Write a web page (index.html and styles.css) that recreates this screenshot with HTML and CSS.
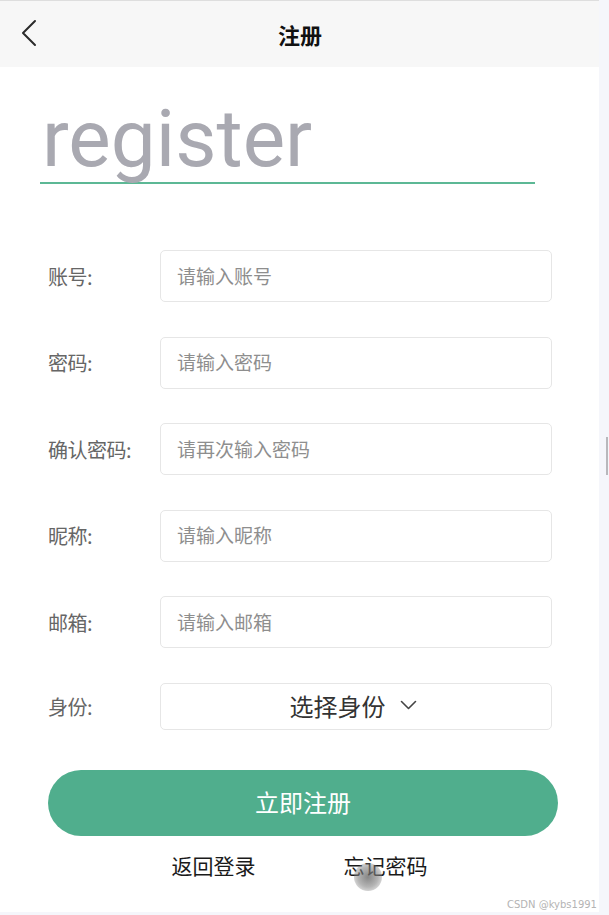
FILE: index.html
```html
<!DOCTYPE html>
<html lang="zh-CN">
<head>
<meta charset="utf-8">
<title>注册</title>
<link rel="stylesheet" href="styles.css">
</head>
<body>
<div class="app">
  <header class="topbar">
    <span class="back">
      <svg width="18" height="28" viewBox="0 0 18 28"><path d="M15 2 L3 14 L15 26" fill="none" stroke="#2b2b2b" stroke-width="2" stroke-linecap="round" stroke-linejoin="round"/></svg>
    </span>
    <h1 class="title">注册</h1>
    <span></span>
  </header>

  <div class="hero">register</div>

  <form class="form">
    <div class="row"><label class="label">账号:</label><input class="field" placeholder="请输入账号"></div>
    <div class="row"><label class="label">密码:</label><input class="field" type="password" placeholder="请输入密码"></div>
    <div class="row"><label class="label">确认密码:</label><input class="field" type="password" placeholder="请再次输入密码"></div>
    <div class="row"><label class="label">昵称:</label><input class="field" placeholder="请输入昵称"></div>
    <div class="row"><label class="label">邮箱:</label><input class="field" placeholder="请输入邮箱"></div>
    <div class="row"><label class="label">身份:</label>
      <div class="select"><span>选择身份</span>
        <svg width="17" height="10" viewBox="0 0 17 10"><path d="M1.5 1.5 L8.5 8.5 L15.5 1.5" fill="none" stroke="#444" stroke-width="1.6" stroke-linecap="round" stroke-linejoin="round"/></svg>
      </div>
    </div>
  </form>

  <button class="submit" type="button">立即注册</button>

  <div class="links">
    <a class="link">返回登录</a>
    <a class="link">忘记密码<span class="touch"></span></a>
  </div>

  <div class="watermark">CSDN @kybs1991</div>
</div>
<div class="scrollmark"></div>
</body>
</html>
```
FILE: styles.css
```css
html, body {
  margin: 0;
  padding: 0;
}
body {
  background: #f5f6fb;
  width: 609px;
  height: 915px;
  overflow: hidden;
  position: relative;
  font-family: "Noto Sans CJK SC", "Noto Sans", sans-serif;
}
.app {
  width: 599px;
  height: 912px;
  background: #fff;
  position: relative;
  display: flex;
  flex-direction: column;
}
.topbar {
  height: 66px;
  border-top: 1px solid #dedede;
  background: #f7f7f7;
  display: grid;
  grid-template-columns: 80px 1fr 80px;
  align-items: center;
}
.back {
  display: flex;
  padding-left: 20px;
  padding-bottom: 3px;
}
.title {
  margin: 0;
  text-align: center;
  font-size: 22px;
  font-weight: 700;
  color: #111;
  padding-left: 1px;
}
.hero {
  margin: 32px 64px 0 40px;
  padding-left: 2px;
  padding-bottom: 3px;
  border-bottom: 2px solid #5cb895;
  font-family: Roboto, sans-serif;
  font-size: 80px;
  line-height: 80px;
  color: #a9a9b1;
}
.form {
  margin: 66px 0 0 0;
  display: flex;
  flex-direction: column;
  gap: 34.5px;
}
.row {
  display: flex;
  align-items: center;
  padding-left: 48px;
}
.label {
  width: 112px;
  font-size: 20px;
  color: #666;
  letter-spacing: -0.5px;
}
.field {
  width: 392px;
  height: 52px;
  box-sizing: border-box;
  border: 1px solid #e6e6e6;
  border-radius: 5px;
  padding: 0 0 2px 16px;
  font-family: "Noto Sans CJK SC", sans-serif;
  font-size: 19px;
  color: #333;
  outline: none;
  background: #fff;
}
.field::placeholder {
  color: #8e8e8e;
}
.select {
  width: 392px;
  height: 47px;
  box-sizing: border-box;
  border: 1px solid #e6e6e6;
  border-radius: 5px;
  display: flex;
  align-items: center;
  justify-content: center;
  gap: 14px;
  font-size: 24px;
  color: #333;
  padding-right: 6px;
  padding-bottom: 2px;
}
.submit {
  margin: 40px 0 0 48px;
  width: 510px;
  height: 66px;
  border: none;
  border-radius: 33px;
  background: #50ae8d;
  color: #fff;
  font-family: "Noto Sans CJK SC", sans-serif;
  font-size: 24px;
  padding: 0 0 2px 0;
}
.links {
  margin-top: 14px;
  display: flex;
  justify-content: center;
  gap: 88px;
}
.link {
  font-size: 21px;
  line-height: 30px;
  color: #1a1a1a;
  position: relative;
}
.touch {
  position: absolute;
  left: 10px;
  top: 13px;
  width: 28px;
  height: 28px;
  border-radius: 50%;
  background: radial-gradient(circle, rgba(105,105,105,0.8) 0%, rgba(130,130,130,0.6) 50%, rgba(170,170,170,0) 100%);
}
.watermark {
  position: absolute;
  right: 2px;
  bottom: 0;
  font-family: "DejaVu Sans", sans-serif;
  font-size: 10px;
  color: #b4b4b4;
  line-height: 14px;
}
.scrollmark {
  position: absolute;
  left: 606px;
  top: 437px;
  width: 2px;
  height: 38px;
  background: #b8b8bc;
}
```
